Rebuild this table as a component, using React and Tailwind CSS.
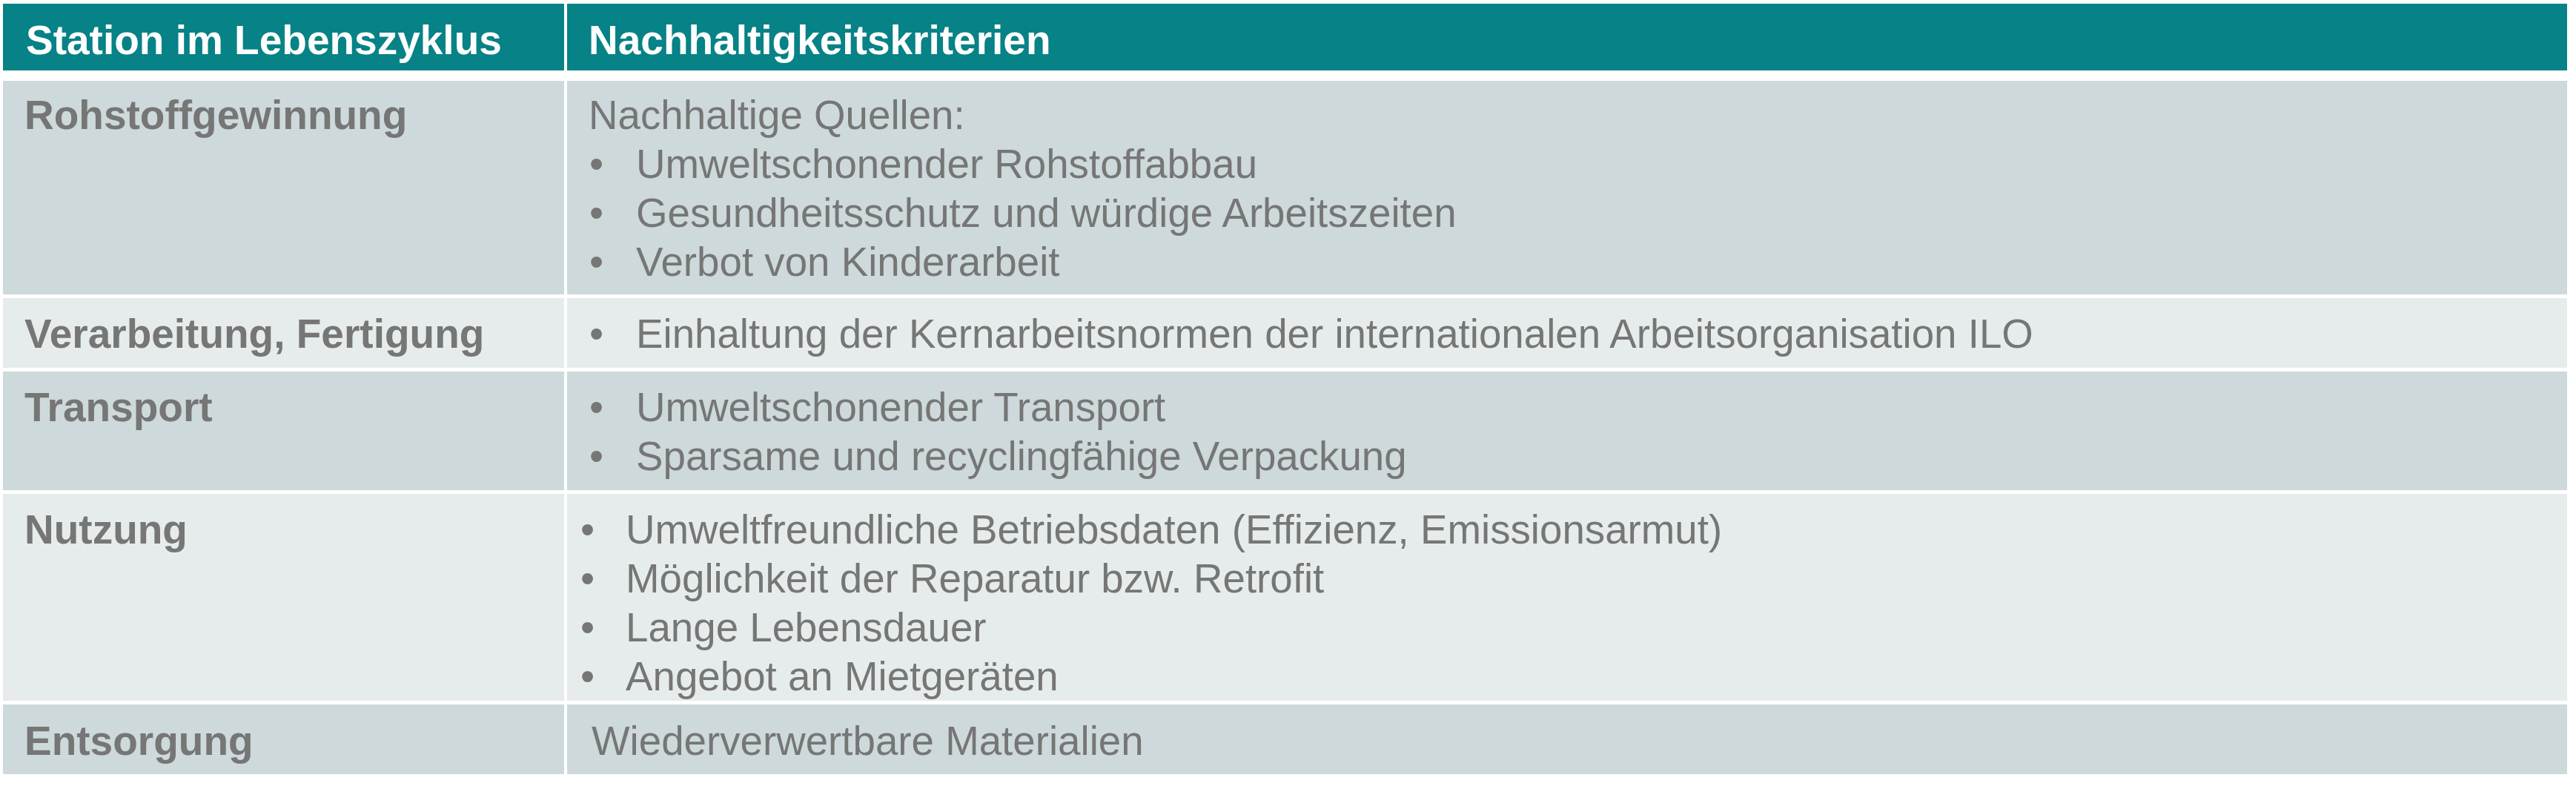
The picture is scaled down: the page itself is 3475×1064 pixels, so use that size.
const rows = [
  {
    label: "Rohstoffgewinnung",
    h: "h-[288px]",
    pt: "pt-[13px]",
    bg: "bg-[#cdd9db]",
    intro: "Nachhaltige Quellen:",
    items: [
      "Umweltschonender Rohstoffabbau",
      "Gesundheitsschutz und würdige Arbeitszeiten",
      "Verbot von Kinderarbeit",
    ],
  },
  {
    label: "Verarbeitung, Fertigung",
    h: "h-[94px]",
    pt: "pt-[15px]",
    bg: "bg-[#e6ecec]",
    items: ["Einhaltung der Kernarbeitsnormen der internationalen Arbeitsorganisation ILO"],
  },
  {
    label: "Transport",
    h: "h-[160px]",
    pt: "pt-[15px]",
    bg: "bg-[#cdd9db]",
    items: ["Umweltschonender Transport", "Sparsame und recyclingfähige Verpackung"],
  },
  {
    label: "Nutzung",
    h: "h-[279px]",
    pt: "pt-[15px]",
    bg: "bg-[#e6ecec]",
    narrow: true,
    items: [
      "Umweltfreundliche Betriebsdaten (Effizienz, Emissionsarmut)",
      "Möglichkeit der Reparatur bzw. Retrofit",
      "Lange Lebensdauer",
      "Angebot an Mietgeräten",
    ],
  },
  {
    label: "Entsorgung",
    h: "h-[94px]",
    pt: "pt-[16px]",
    bg: "bg-[#cdd9db]",
    plain: "Wiederverwertbare Materialien",
  },
];

function Bullets({ items, narrow }) {
  return (
    <ul>
      {items.map((t) => (
        <li key={t} className="flex">
          <span className={narrow ? "w-[61px] shrink-0" : "w-[63px] shrink-0"}>•</span>
          <span>{t}</span>
        </li>
      ))}
    </ul>
  );
}

export default function App() {
  return (
    <div className="w-[3475px] h-[1064px] bg-white pt-[5px] pl-[4px] font-['Liberation_Sans',Arial,sans-serif] text-[55px] leading-[66px]">
      <div className="grid grid-cols-[757px_2698px] gap-x-[4px] h-[90px] bg-white text-white font-bold">
        <div className="bg-[#078286] pl-[31px] pt-[16px]">Station im Lebenszyklus</div>
        <div className="bg-[#078286] pl-[29px] pt-[16px]">Nachhaltigkeitskriterien</div>
      </div>

      <div className="mt-[14px] flex flex-col gap-y-[5px] text-[#767676]">
        {rows.map((r) => (
          <div key={r.label} className={"grid grid-cols-[757px_2698px] gap-x-[4px] " + r.h}>
            <div className={r.bg + " " + r.pt + " pl-[29px] font-bold"}>{r.label}</div>
            <div className={r.bg + " " + r.pt + " text-[54.7px]" + (r.narrow ? " pl-[18px]" : r.plain ? " pl-[33px]" : " pl-[30px]")}>
              {r.intro && <div className="-ml-[1px]">{r.intro}</div>}
              {r.items && <Bullets items={r.items} narrow={r.narrow} />}
              {r.plain && <div>{r.plain}</div>}
            </div>
          </div>
        ))}
      </div>
    </div>
  );
}
